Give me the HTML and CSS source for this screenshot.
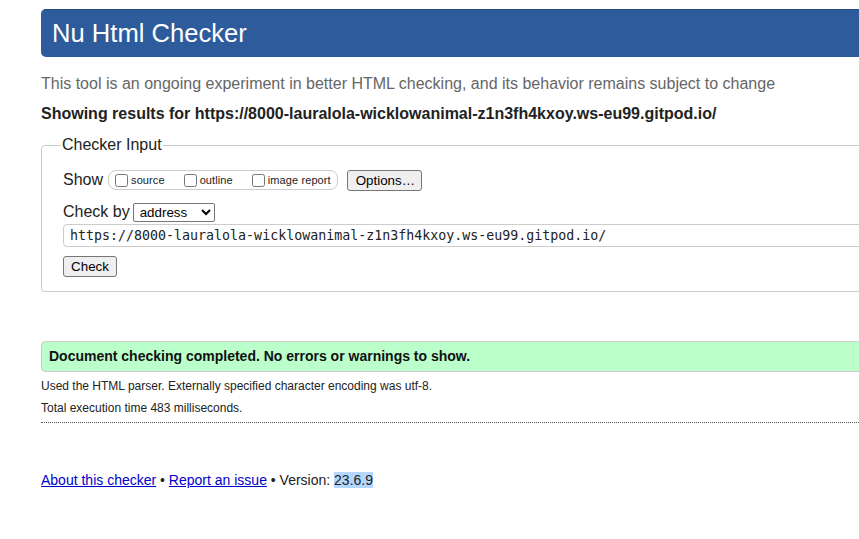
FILE: index.html
```html
<!DOCTYPE html>
<html lang="en">
<head>
<meta charset="utf-8">
<title>Showing results for https://8000-lauralola-wicklowanimal-z1n3fh4kxoy.ws-eu99.gitpod.io/ - Nu Html Checker</title>
<link rel="stylesheet" href="styles.css">
</head>
<body>
<div class="page">
  <h1 class="title">Nu Html Checker</h1>
  <p class="tagline">This tool is an ongoing experiment in better HTML checking, and its behavior remains subject to change</p>
  <p class="showing">Showing results for https://8000-lauralola-wicklowanimal-z1n3fh4kxoy.ws-eu99.gitpod.io/</p>

  <fieldset class="input-set">
    <legend class="input-legend">Checker Input</legend>
    <div class="row show-row">
      <span class="row-label">Show</span>
      <span class="show-group">
        <label class="opt"><input type="checkbox" class="cb">source</label>
        <label class="opt"><input type="checkbox" class="cb">outline</label>
        <label class="opt"><input type="checkbox" class="cb">image report</label>
      </span>
      <button type="button" class="btn options-btn">Options…</button>
    </div>
    <div class="row checkby-row">
      <span class="row-label">Check by</span>
      <select class="select"><option>address</option></select>
    </div>
    <div class="url-box">https://8000-lauralola-wicklowanimal-z1n3fh4kxoy.ws-eu99.gitpod.io/</div>
    <div class="row check-row">
      <button type="button" class="btn check-btn">Check</button>
    </div>
  </fieldset>

  <p class="success">Document checking completed. No errors or warnings to show.</p>
  <p class="details">Used the HTML parser. Externally specified character encoding was utf-8.</p>
  <p class="details">Total execution time 483 milliseconds.</p>
  <hr class="sep">

  <p class="footer"><a href="#" class="link">About this checker</a> • <a href="#" class="link">Report an issue</a> • Version: <span class="sel">23.6.9</span></p>
</div>
</body>
</html>
```
FILE: styles.css
```css
html, body {
  margin: 0;
  padding: 0;
  overflow: hidden;
  background: #fff;
}
body {
  font-family: "Liberation Sans", Arial, sans-serif;
  color: #222;
  width: 859px;
  height: 539px;
}
.page {
  width: 1100px;
  padding: 9px 0 0 41px;
}
.title {
  margin: 0;
  height: 48px;
  line-height: 47px;
  padding: 0 11px;
  font-size: 25.6px;
  font-weight: normal;
  color: #fff;
  background: #2d5b9c;
  border-top: 1px solid #27497a;
  box-sizing: border-box;
  border-radius: 5px 0 0 5px;
}
.tagline {
  margin: 18px 0 0 0;
  font-size: 16px;
  line-height: 18px;
  color: #666;
}
.showing {
  margin: 12px 0 0 0;
  font-size: 16px;
  line-height: 18px;
  font-weight: bold;
  color: #222;
}
.input-set {
  margin: 13px 0 0 0;
  padding: 15px 20px 14px 21px;
  border: 1px solid #ccc;
  border-radius: 4px;
  min-width: 0;
}
.input-legend {
  padding: 0 1px;
  margin-left: -2px;
  font-size: 16px;
  color: #222;
}
.row {
  display: flex;
  align-items: center;
}
.row-label {
  font-size: 16px;
  color: #222;
}
.show-row {
  height: 22px;
  margin-top: 0;
}
.show-group {
  display: inline-flex;
  align-items: center;
  gap: 0;
  margin-left: 5px;
  height: 18px;
  padding: 0 6px 0 6px;
  border: 1px solid #ccc;
  border-radius: 8px;
}
.opt {
  display: inline-flex;
  align-items: center;
  font-size: 11px;
  letter-spacing: 0.1px;
  color: #222;
  margin-right: 19px;
}
.opt:last-child {
  margin-right: 0;
}
.cb {
  margin: 0 3px 0 0;
  width: 13px;
  height: 13px;
}
.btn {
  font-family: "Liberation Sans", Arial, sans-serif;
  font-size: 13.333px;
  color: #000;
  background: #efefef;
  border: 1px solid #767676;
  border-radius: 3px;
  padding: 0 8px;
  height: 21px;
}
.options-btn {
  margin-left: 9px;
  width: 75px;
}
.checkby-row {
  margin-top: 11px;
  height: 20px;
}
.select {
  margin-left: 3px;
  font-family: "Liberation Sans", Arial, sans-serif;
  font-size: 13.333px;
  color: #000;
  width: 82px;
  height: 19px;
  border: 1px solid #767676;
  border-radius: 2px;
  background: #fff;
  padding: 0 0 0 2px;
}
.url-box {
  margin-top: 2px;
  height: 23px;
  box-sizing: border-box;
  border: 1px solid #ccc;
  border-radius: 4px;
  padding: 0 6px;
  font-family: "DejaVu Sans Mono", Menlo, monospace;
  font-size: 13.3px;
  line-height: 21px;
  color: #222;
  white-space: nowrap;
}
.check-row {
  margin-top: 9px;
}
.check-btn {
  width: 54px;
  padding: 0;
}
.success {
  margin: 49px 0 0 0;
  height: 31px;
  box-sizing: border-box;
  padding: 0 7px;
  line-height: 29px;
  background: #bbffcb;
  border: 1px solid #ccc;
  border-radius: 4px 0 0 4px;
  font-size: 14px;
  font-weight: bold;
  color: #111;
}
.details {
  margin: 6px 0 0 0;
  font-size: 12px;
  line-height: 16px;
  color: #222;
}
.details + .details {
  margin-top: 6px;
}
.sep {
  margin: 6px 0 0 0;
  border: 0;
  border-top: 1px dotted #555;
  height: 0;
}
.footer {
  margin: 49px 0 0 0;
  font-size: 14px;
  line-height: 16px;
  color: #222;
}
.link {
  color: #00c;
  text-decoration: underline;
}
.sel {
  background: #b3d7fe;
}
```
